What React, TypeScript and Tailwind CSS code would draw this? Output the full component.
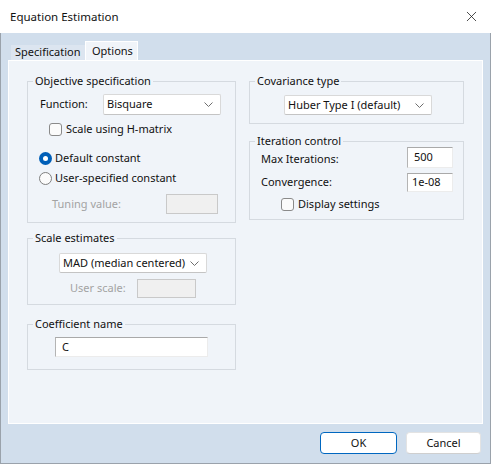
import { ReactNode } from "react";
import { X } from "lucide-react";

function Chevron() {
  return (
    <svg width="9" height="5" viewBox="0 0 9 5" className="shrink-0">
      <path d="M0.5 0.5 L4.5 4.5 L8.5 0.5" fill="none" stroke="#6e6e6e" strokeWidth="1" />
    </svg>
  );
}

function Group({ title, className, children }: { title: string; className: string; children: ReactNode }) {
  return (
    <fieldset className={"border border-[#d5dae0] " + className}>
      <legend className="ml-[5px] px-[2px] leading-[16px]">{title}</legend>
      {children}
    </fieldset>
  );
}

function Select({ value, className }: { value: string; className: string }) {
  return (
    <div
      className={
        "flex items-center justify-between bg-white border border-[#d9d9d9] border-b-[#c4c4c4] rounded-[2px] pl-[3px] pr-[7px] " +
        className
      }
    >
      <span>{value}</span>
      <Chevron />
    </div>
  );
}

function TextBox({ value, className, disabled }: { value?: string; className: string; disabled?: boolean }) {
  return (
    <div
      className={
        (disabled
          ? "bg-[#f0f0f0] border border-[#c9c9c9] "
          : "bg-white border border-[#ececec] border-t-[#a9a9a9] border-l-[#b4b4b4] ") +
        "flex items-center pl-[4px] " +
        className
      }
    >
      {value}
    </div>
  );
}

function CheckBox({ label, className }: { label: string; className: string }) {
  return (
    <label className={"flex items-center h-[13px] gap-[4px] " + className}>
      <span className="w-[13px] h-[13px] rounded-[3px] border border-[#8a8a8a] bg-[#fbfbfb]" />
      <span>{label}</span>
    </label>
  );
}

function Radio({ label, checked, className }: { label: string; checked?: boolean; className: string }) {
  return (
    <label className={"flex items-center h-[13px] gap-[3px] " + className}>
      {checked ? (
        <span className="w-[13px] h-[13px] rounded-full bg-[#005fb8] flex items-center justify-center">
          <span className="w-[5px] h-[5px] rounded-full bg-white" />
        </span>
      ) : (
        <span className="w-[13px] h-[13px] rounded-full border border-[#7f7f7f] bg-[#fbfbfb]" />
      )}
      <span>{label}</span>
    </label>
  );
}

export default function App() {
  return (
    <div className="w-[491px] h-[464px] flex flex-col bg-[#d1deec] text-[11px] text-[#111] font-['Segoe_UI','Noto_Sans',sans-serif] shadow-[inset_0_0_0_1px_#9aa2ab] overflow-hidden">
      <div className="h-[33px] shrink-0 bg-white flex items-center justify-between pl-[10px] pr-[11px]">
        <span className="text-[11.5px]">Equation Estimation</span>
        <X size={17} strokeWidth={1.1} color="#1a1a1a" />
      </div>

      <div className="h-[27px] shrink-0 flex items-end pl-[11px]">
        <div className="w-[74px] h-[15px] bg-[#dce5f0] pl-[4px] flex items-center">Specification</div>
        <div className="w-[53px] h-[19px] bg-[#f0f4f9] border-t border-l border-r border-white pl-[6px] flex items-center">
          Options
        </div>
      </div>

      <div className="ml-[8px] w-[475px] h-[364px] shrink-0 bg-[#f0f4f9] border border-white flex">
        <div className="ml-[18px] w-[209px] pt-[12px] flex flex-col">
          <Group title="Objective specification" className="h-[150px]">
            <div className="mt-[5px] h-[21px] flex items-center pl-[12px]">
              <span className="w-[63px]">Function:</span>
              <Select value="Bisquare" className="w-[118px] h-[21px]" />
            </div>
            <CheckBox label="Scale using H-matrix" className="mt-[8px] pl-[21px]" />
            <Radio label="Default constant" checked className="mt-[16px] pl-[11px]" />
            <Radio label="User-specified constant" className="mt-[7px] pl-[11px]" />
            <div className="mt-[9px] h-[20px] flex items-center pl-[24px]">
              <span className="w-[114px] text-[#a3a3a3]">Tuning value:</span>
              <TextBox disabled className="w-[52px] h-[20px]" />
            </div>
          </Group>

          <Group title="Scale estimates" className="mt-[7px] h-[75px]">
            <Select value="MAD (median centered)" className="mt-[7px] ml-[31px] w-[148px] h-[20px]" />
            <div className="mt-[6px] h-[19px] flex items-center pl-[42px]">
              <span className="w-[67px] text-[#a3a3a3]">User scale:</span>
              <TextBox disabled className="w-[59px] h-[19px]" />
            </div>
          </Group>

          <Group title="Coefficient name" className="mt-[11px] h-[54px]">
            <TextBox value="C" className="mt-[5px] ml-[27px] w-[153px] h-[20px] pl-[6px]" />
          </Group>
        </div>

        <div className="ml-[13px] w-[215px] pt-[12px] flex flex-col">
          <Group title="Covariance type" className="h-[51px]">
            <Select value="Huber Type I (default)" className="mt-[6px] ml-[34px] w-[148px] h-[20px]" />
          </Group>

          <Group title="Iteration control" className="mt-[9px] h-[87px]">
            <div className="-mt-[2px] h-[21px] flex items-center pl-[11px]">
              <span className="w-[146px] pt-[4px]">Max Iterations:</span>
              <TextBox value="500" className="w-[46px] h-[21px] pl-[6px]" />
            </div>
            <div className="mt-[5px] h-[19px] flex items-center pl-[11px]">
              <span className="w-[146px]">Convergence:</span>
              <TextBox value="1e-08" className="w-[46px] h-[19px] pl-[3px]" />
            </div>
            <CheckBox label="Display settings" className="mt-[6px] pl-[31px] gap-[3px]" />
          </Group>
        </div>
      </div>

      <div className="mt-[8px] flex justify-end gap-[9px] pr-[10px]">
        <button className="w-[77px] h-[22px] bg-white border border-[#0067c0] rounded-[4px]">OK</button>
        <button className="w-[75px] h-[22px] bg-white border border-[#e3e3e3] border-b-[#cfcfcf] rounded-[4px]">
          Cancel
        </button>
      </div>
    </div>
  );
}
